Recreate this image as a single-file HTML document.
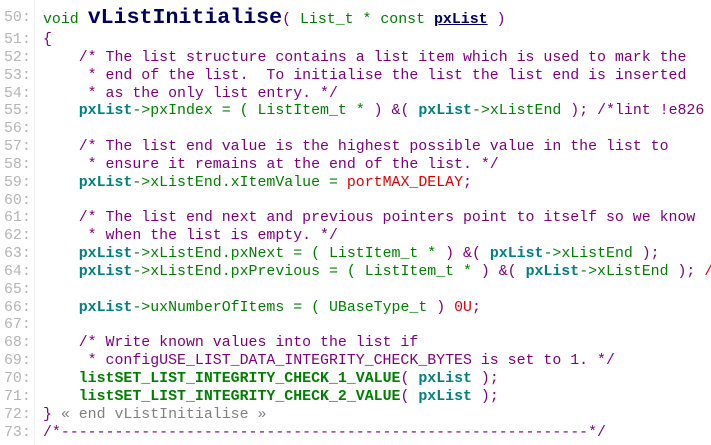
<!DOCTYPE html>
<html><head><meta charset="utf-8"><style>
html,body{margin:0;padding:0;background:#fff;width:711px;height:445px;overflow:hidden}
body{position:relative;font-family:"Liberation Mono",monospace;font-size:14.9px}
.l{position:absolute;left:0;height:18px;line-height:18px;white-space:pre}
.n{position:absolute;left:4px;width:36px;color:#b4b4b4}
.c{position:absolute;left:43px;color:#008000}
.cm{color:#800080}
.p{color:#008080;font-weight:bold}
.pu{color:#800080}
.r{color:#e00000}
.g{color:#008000;font-weight:bold}
.gray{color:#808080}
.vl{position:absolute;left:34px;top:0;width:1px;height:445px;background:#eeeeee}
</style></head><body>
<div class="vl"></div>
<div class="l" style="top:7px;height:22px;line-height:22px"><span class="n">50:</span><span class="c">void <b style="color:#000060;font-size:21.6px">vListInitialise</b><span class="pu">(</span> List_t * const <b style="color:#000060;text-decoration:underline">pxList</b> <span class="pu">)</span></span></div>
<div class="l" style="top:31px"><span class="n">51:</span><span class="c pu">{</span></div>
<div class="l" style="top:49px"><span class="n">52:</span><span class="c cm">    /* The list structure contains a list item which is used to mark the</span></div>
<div class="l" style="top:67px"><span class="n">53:</span><span class="c cm">     * end of the list.  To initialise the list the list end is inserted</span></div>
<div class="l" style="top:85px"><span class="n">54:</span><span class="c cm">     * as the only list entry. */</span></div>
<div class="l" style="top:102px"><span class="n">55:</span><span class="c">    <span class="p">pxList</span>-&gt;pxIndex = ( ListItem_t * <span class="pu">)</span> <span class="pu">&amp;(</span> <span class="p">pxList</span>-&gt;xListEnd <span class="pu">);</span> <span class="cm">/*lint !e826</span></span></div>
<div class="l" style="top:120px"><span class="n">56:</span></div>
<div class="l" style="top:138px"><span class="n">57:</span><span class="c cm">    /* The list end value is the highest possible value in the list to</span></div>
<div class="l" style="top:156px"><span class="n">58:</span><span class="c cm">     * ensure it remains at the end of the list. */</span></div>
<div class="l" style="top:174px"><span class="n">59:</span><span class="c">    <span class="p">pxList</span>-&gt;xListEnd.xItemValue = <span class="r">portMAX_DELAY</span><span class="pu">;</span></span></div>
<div class="l" style="top:192px"><span class="n">60:</span></div>
<div class="l" style="top:209px"><span class="n">61:</span><span class="c cm">    /* The list end next and previous pointers point to itself so we know</span></div>
<div class="l" style="top:227px"><span class="n">62:</span><span class="c cm">     * when the list is empty. */</span></div>
<div class="l" style="top:245px"><span class="n">63:</span><span class="c">    <span class="p">pxList</span>-&gt;xListEnd.pxNext = ( ListItem_t * <span class="pu">)</span> <span class="pu">&amp;(</span> <span class="p">pxList</span>-&gt;xListEnd <span class="pu">);</span></span></div>
<div class="l" style="top:263px"><span class="n">64:</span><span class="c">    <span class="p">pxList</span>-&gt;xListEnd.pxPrevious = ( ListItem_t * <span class="pu">)</span> <span class="pu">&amp;(</span> <span class="p">pxList</span>-&gt;xListEnd <span class="pu">);</span> <span class="r">/</span></span></div>
<div class="l" style="top:281px"><span class="n">65:</span></div>
<div class="l" style="top:299px"><span class="n">66:</span><span class="c">    <span class="p">pxList</span>-&gt;uxNumberOfItems = ( UBaseType_t <span class="pu">)</span> <span class="r">0U</span><span class="pu">;</span></span></div>
<div class="l" style="top:316px"><span class="n">67:</span></div>
<div class="l" style="top:334px"><span class="n">68:</span><span class="c cm">    /* Write known values into the list if</span></div>
<div class="l" style="top:352px"><span class="n">69:</span><span class="c cm">     * configUSE_LIST_DATA_INTEGRITY_CHECK_BYTES is set to 1. */</span></div>
<div class="l" style="top:370px"><span class="n">70:</span><span class="c">    <span class="g">listSET_LIST_INTEGRITY_CHECK_1_VALUE</span><span class="pu">(</span> <span class="p">pxList</span> <span class="pu">);</span></span></div>
<div class="l" style="top:388px"><span class="n">71:</span><span class="c">    <span class="g">listSET_LIST_INTEGRITY_CHECK_2_VALUE</span><span class="pu">(</span> <span class="p">pxList</span> <span class="pu">);</span></span></div>
<div class="l" style="top:406px"><span class="n">72:</span><span class="c"><span class="pu">}</span> <span class="gray">« end vListInitialise »</span></span></div>
<div class="l" style="top:424px"><span class="n">73:</span><span class="c cm">/*-----------------------------------------------------------*/</span></div>
</body></html>
